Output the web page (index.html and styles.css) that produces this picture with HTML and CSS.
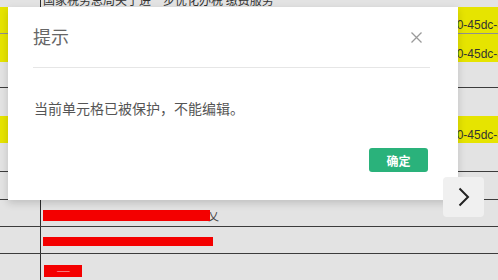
FILE: index.html
```html
<!DOCTYPE html>
<html lang="zh-CN">
<head>
<meta charset="utf-8">
<title>提示</title>
<link rel="stylesheet" href="styles.css">
</head>
<body>
<div class="sheet">
  <div class="row r0"><div class="cell a"></div><div class="cell b top-text">国家税务总局关于进一步优化办税 缴费服务</div><div class="cell c"></div></div>
  <div class="row r1 hl soft"><div class="cell a"></div><div class="cell b"></div><div class="cell c"><span class="code">e0-45dc-8f2a</span></div></div>
  <div class="row r2 hl"><div class="cell a"></div><div class="cell b"></div><div class="cell c"><span class="code">e0-45dc-8f2a</span></div></div>
  <div class="row r3 dark"><div class="cell a"></div><div class="cell b"></div><div class="cell c"></div></div>
  <div class="row r4"><div class="cell a"></div><div class="cell b"></div><div class="cell c"></div></div>
  <div class="row r5 hl"><div class="cell a"></div><div class="cell b"></div><div class="cell c"><span class="code">e0-45dc-8f2a</span></div></div>
  <div class="row r6 dark"><div class="cell a"></div><div class="cell b"></div><div class="cell c"></div></div>
  <div class="row r7 dark"><div class="cell a"></div><div class="cell b"></div><div class="cell c"></div></div>
  <div class="row r8 dark"><div class="cell a"></div><div class="cell b"><span class="redact w1"></span><span class="tail">乂</span></div><div class="cell c"></div></div>
  <div class="row r9 dark"><div class="cell a"></div><div class="cell b"><span class="redact w2"></span></div><div class="cell c"></div></div>
  <div class="row r10"><div class="cell a"></div><div class="cell b"><span class="redact w3"><span class="dash">——</span></span></div><div class="cell c"></div></div>
</div>

<div class="dialog" role="dialog">
  <div class="dialog-header">
    <span class="dialog-title">提示</span>
    <span class="dialog-close" aria-label="关闭">
      <svg width="11" height="11" viewBox="0 0 11 11"><path d="M0.5 0.5 L10.5 10.5 M10.5 0.5 L0.5 10.5" stroke="#9a9a9a" stroke-width="1.3" fill="none"/></svg>
    </span>
  </div>
  <div class="dialog-body">当前单元格已被保护，不能编辑。</div>
  <div class="dialog-footer"><button class="btn-ok">确定</button></div>
</div>

<button class="next" aria-label="下一个">
  <svg width="12" height="20" viewBox="0 0 12 20"><polyline points="1.5,1.5 10,10 1.5,18.5" stroke="#222" stroke-width="2" fill="none"/></svg>
</button>
</body>
</html>
```
FILE: styles.css
```css
html, body {
  margin: 0;
  padding: 0;
}
body {
  width: 498px;
  height: 280px;
  overflow: hidden;
  background: #e3e3e3;
  font-family: "Noto Sans CJK SC", "Liberation Sans", sans-serif;
  position: relative;
}

.sheet {
  display: flex;
  flex-direction: column;
}
.row {
  display: grid;
  grid-template-columns: 41px 405px 1fr;
  box-sizing: border-box;
}
.row.r0 { height: 7px; }
.row.r1 { height: 27px; }
.row.r2 { height: 28px; }
.row.r3 { height: 26px; }
.row.r4 { height: 28px; }
.row.r5 { height: 27px; }
.row.r6 { height: 29px; }
.row.r7 { height: 28px; }
.row.r8 { height: 27px; }
.row.r9 { height: 27px; }
.row.r10 { height: 27px; }

.row.dark { border-bottom: 1px solid #3c3c3c; }
.row.soft { border-bottom: 1px solid #8f8f8f; }
.row.hl .cell { background: #e6e400; }

.cell {
  overflow: hidden;
  display: flex;
  align-items: flex-end;
  white-space: nowrap;
  padding-bottom: 4px;
  box-sizing: border-box;
}
.cell.a { border-right: 1px solid #2c2c2c; }
.cell.b { padding-left: 2px; }
.cell.c { padding-left: 4px; padding-bottom: 1px; }

.top-text {
  font-size: 12px;
  line-height: 14px;
  color: #333;
  padding-bottom: 0;
}
.code {
  font-family: "Liberation Sans", sans-serif;
  font-size: 12px;
  line-height: 14px;
  color: #333;
}

.redact {
  display: inline-block;
  background: #f40000;
  height: 11px;
  position: relative;
}
.redact.w1 { width: 167px; height: 11px; margin-bottom: 1px; }
.redact.w2 { width: 170px; height: 9px; margin-bottom: 3px; }
.redact.w3 { width: 38px; height: 12px; margin-left: 1px; }
.tail {
  font-size: 11px;
  line-height: 12px;
  color: #444;
  margin-left: -2px;
}
.dash {
  display: block;
  font-size: 8px;
  line-height: 12px;
  color: #f7c9c9;
  text-align: center;
  letter-spacing: -1px;
}

/* dialog overlays the sheet */
.dialog {
  position: absolute;
  left: 8px;
  top: 7px;
  width: 450px;
  height: 193px;
  box-sizing: border-box;
  background: #fff;
  box-shadow: 0 3px 8px rgba(0, 0, 0, 0.16);
  padding: 0 28px 28px 25px;
  display: flex;
  flex-direction: column;
  z-index: 2;
}
.dialog-header {
  height: 61px;
  box-sizing: border-box;
  border-bottom: 1px solid #e6e6e6;
  display: flex;
  align-items: center;
  justify-content: space-between;
}
.dialog-title {
  font-size: 18px;
  line-height: 24px;
  color: #666;
  margin-top: -2px;
}
.dialog-close {
  display: flex;
  width: 11px;
  height: 11px;
  margin-right: 8px;
}
.dialog-body {
  padding-top: 29px;
  font-size: 14px;
  line-height: 22px;
  color: #555;
  padding-left: 1px;
}
.dialog-footer {
  margin-top: auto;
  display: flex;
  justify-content: flex-end;
  padding-right: 2px;
}
.btn-ok {
  width: 59px;
  height: 24px;
  border: none;
  border-radius: 3px;
  background: #2ab27b;
  color: #fff;
  font-family: "Noto Sans CJK SC", sans-serif;
  font-size: 12px;
  font-weight: 700;
  padding: 0;
  cursor: pointer;
}

.next {
  position: absolute;
  left: 443px;
  top: 177px;
  width: 41px;
  height: 40px;
  border: none;
  border-radius: 4px;
  background: #f0f0f0;
  padding: 0;
  display: flex;
  align-items: center;
  justify-content: center;
  z-index: 3;
}
```
